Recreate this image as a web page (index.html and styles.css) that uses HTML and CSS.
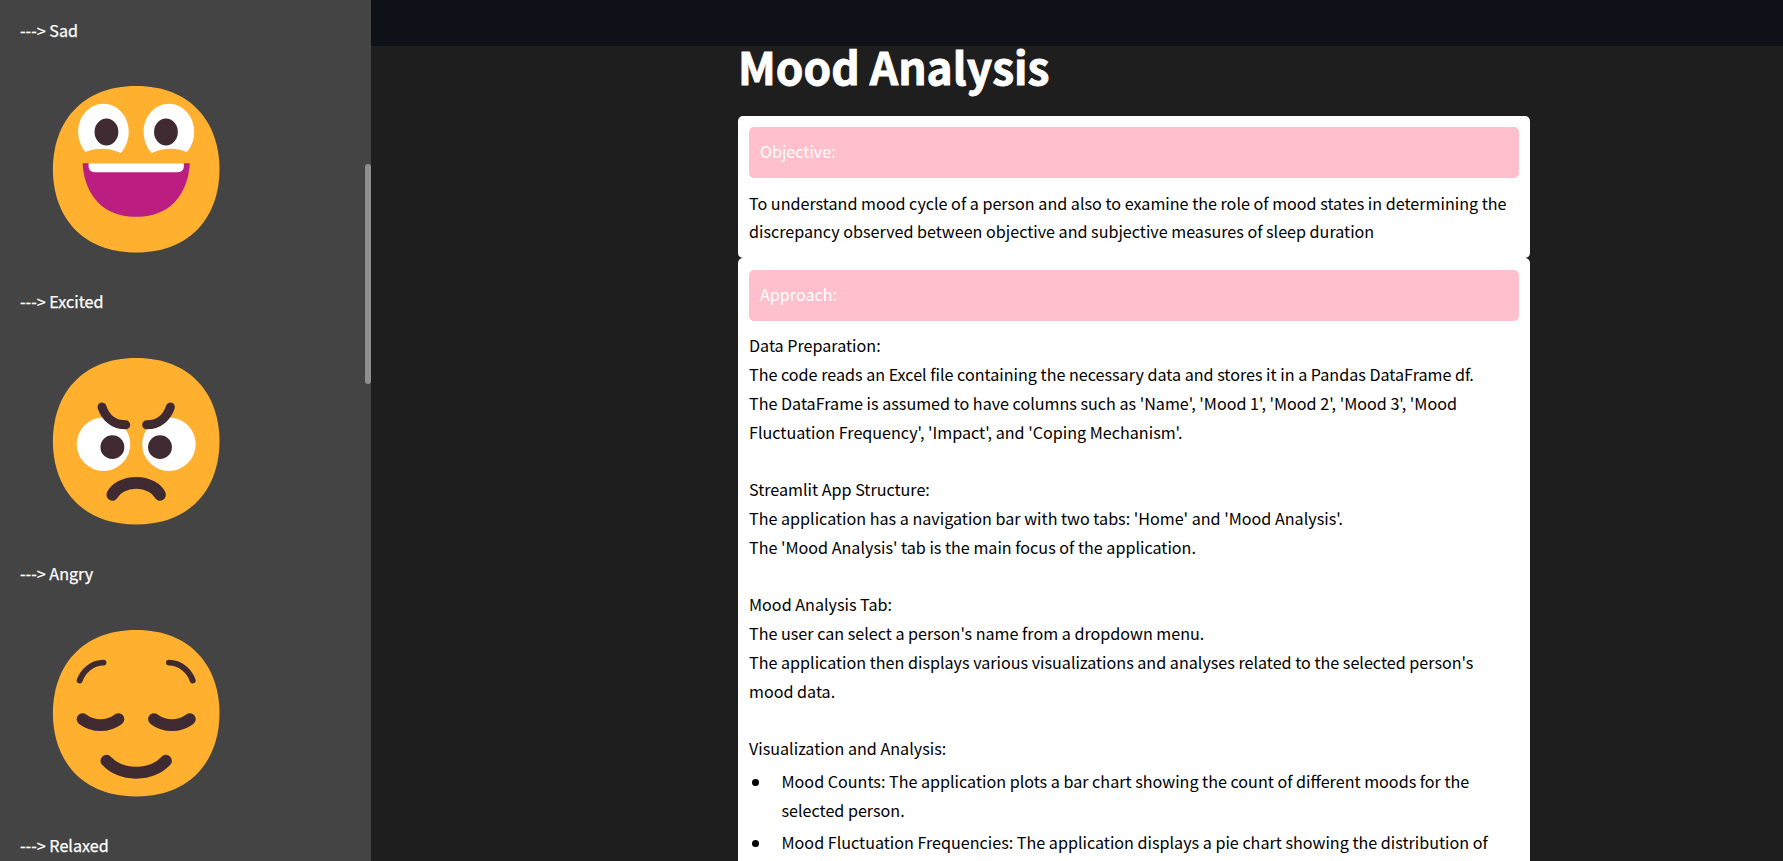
FILE: index.html
```html
<!DOCTYPE html>
<html lang="en">
<head>
<meta charset="utf-8">
<title>Mood Analysis</title>
<link rel="stylesheet" href="styles.css">
</head>
<body>
<div class="app">
  <aside class="sidebar">
    <p class="label">---&gt; Sad</p>
    <svg class="face" viewBox="0 0 32 32">
      <path class="skin" d="M16 30C25.33 30 30 23.73 30 16S25.33 2 16 2 2 8.27 2 16s4.67 14 14 14Z"/>
      <path class="white" d="M7.48 13.1C6.7 12.2 6.25 11 6.25 9.7C6.25 7.1 8.15 5 10.5 5S14.75 7.1 14.75 9.7C14.75 11.05 14.25 12.35 13.42 13.26C11.5 12.4 9.5 12.3 7.48 13.1Z"/>
      <path class="white" d="M24.52 13.1C25.3 12.2 25.75 11 25.75 9.7C25.75 7.1 23.85 5 21.5 5S17.25 7.1 17.25 9.7C17.25 11.05 17.75 12.35 18.58 13.26C20.5 12.4 22.5 12.3 24.52 13.1Z"/>
      <ellipse class="dark" cx="11" cy="9.75" rx="2" ry="2.25"/>
      <ellipse class="dark" cx="21" cy="9.75" rx="2" ry="2.25"/>
      <path class="mouth" d="M16 24C7 24 7 15 7 15H25C25 15 25 24 16 24Z"/>
      <path class="white" d="M8 15H24V15.5C24 16.1 23.6 16.5 23 16.5H9C8.4 16.5 8 16.1 8 15.5V15Z"/>
    </svg>
    <p class="label">---&gt; Excited</p>
    <svg class="face" viewBox="0 0 32 32">
      <path class="skin" d="M16 30C25.33 30 30 23.73 30 16S25.33 2 16 2 2 8.27 2 16s4.67 14 14 14Z"/>
      <circle class="white" cx="10.5" cy="16.5" r="4.5"/>
      <circle class="white" cx="21.5" cy="16.5" r="4.5"/>
      <circle class="dark" cx="12" cy="17" r="2"/>
      <circle class="dark" cx="20" cy="17" r="2"/>
      <path class="line medium" d="M10.25 10.25C10.75 11.75 12 13.25 14.25 13.25M21.75 10.25C21.25 11.75 20 13.25 17.75 13.25"/>
      <path class="line thick" d="M12 25C12.5 24 14 23 16 23S19.5 24 20 25"/>
    </svg>
    <p class="label">---&gt; Angry</p>
    <svg class="face" viewBox="0 0 32 32">
      <path class="skin" d="M16 30C25.33 30 30 23.73 30 16S25.33 2 16 2 2 8.27 2 16s4.67 14 14 14Z"/>
      <path class="line thin" d="M6.5 10.5C7 9 8.5 7.5 10.5 7.5M25.5 10.5C25 9 23.5 7.5 21.5 7.5"/>
      <path class="line thick" d="M7 17C8 17.75 9 18 10 18S12 17.75 13 17M19 17C20 17.75 21 18 22 18S24 17.75 25 17M11 24C13.5 26.67 18.5 26.67 21 24"/>
    </svg>
    <p class="label">---&gt; Relaxed</p>
    <div class="thumb"></div>
  </aside>
  <div class="view">
    <header class="topbar"></header>
    <main class="content">
      <h1 class="title">Mood Analysis</h1>
      <section class="card first">
        <h2 class="band">Objective:</h2>
        <p class="text intro">To understand mood cycle of a person and also to examine the role of mood states in determining the<br>discrepancy observed between objective and subjective measures of sleep duration</p>
      </section>
      <section class="card">
        <h2 class="band">Approach:</h2>
        <p class="text">Data Preparation:<br>The code reads an Excel file containing the necessary data and stores it in a Pandas DataFrame df.<br>The DataFrame is assumed to have columns such as 'Name', 'Mood 1', 'Mood 2', 'Mood 3', 'Mood<br>Fluctuation Frequency', 'Impact', and 'Coping Mechanism'.</p>
        <p class="text">Streamlit App Structure:<br>The application has a navigation bar with two tabs: 'Home' and 'Mood Analysis'.<br>The 'Mood Analysis' tab is the main focus of the application.</p>
        <p class="text">Mood Analysis Tab:<br>The user can select a person's name from a dropdown menu.<br>The application then displays various visualizations and analyses related to the selected person's<br>mood data.</p>
        <p class="text">Visualization and Analysis:</p>
        <ul class="points">
          <li><span class="dot"></span><span>Mood Counts: The application plots a bar chart showing the count of different moods for the<br>selected person.</span></li>
          <li><span class="dot"></span><span>Mood Fluctuation Frequencies: The application displays a pie chart showing the distribution of</span></li>
        </ul>
      </section>
    </main>
  </div>
</div>
</body>
</html>
```
FILE: styles.css
```css
* { box-sizing: border-box; margin: 0; padding: 0; }
html, body { height: 100%; overflow: hidden; }
body {
  background: #1e1e1e;
  color: #fff;
  font-family: "Noto Sans CJK SC", "Noto Sans", sans-serif;
  font-size: 16.14px;
  line-height: 29px;
}
.app { display: flex; height: 861px; overflow: hidden; }
.sidebar {
  position: relative;
  flex: none;
  width: 371px;
  padding: 15.6px 20px 0;
  background: #444;
  overflow: hidden;
}
.label { height: 29px; line-height: 28.8px; white-space: nowrap; -webkit-text-stroke: 0.25px #fff; }
.face {
  display: block;
  width: 190.4px;
  height: 190.4px;
  margin: 29.5px 0 22.9px 20.6px;
}
.skin { fill: #ffb02e; }
.white { fill: #fff; }
.dark { fill: #402a32; }
.mouth { fill: #bb1d80; }
.line { fill: none; stroke: #402a32; stroke-linecap: round; }
.thin { stroke-width: 1; }
.medium { stroke-width: 1.5; }
.thick { stroke-width: 2; }
.thumb {
  position: absolute;
  right: 0;
  top: 164px;
  width: 6px;
  height: 220px;
  border-radius: 3px;
  background: #8f8f8f;
}
.view { flex: 1; display: flex; flex-direction: column; min-width: 0; }
.topbar { flex: none; height: 46px; background: #0e1117; }
.content { width: 792px; margin-left: 367px; }
.title {
  height: 70px;
  font-size: 44.3px;
  font-weight: 700;
  line-height: 41px;
  white-space: nowrap;
  -webkit-text-stroke: 0.9px #fff;
}
.card {
  min-height: 620px;
  padding: 12px 11px 11px;
  border-radius: 5px;
  background: #fff;
  color: #000;
}
.card.first { min-height: 0; height: 142px; padding-top: 11px; }
.band {
  height: 51px;
  padding: 10px 11px;
  margin-bottom: 9.7px;
  border-radius: 5px;
  background: #ffbfcc;
  color: #fff;
  font-size: inherit;
  font-weight: 400;
  line-height: 28.8px;
}
.text { margin-bottom: 28px; white-space: nowrap; }
.intro { line-height: 28px; margin-top: 11px; }
.points { margin-top: -24px; list-style: none; white-space: nowrap; }
.points li { display: flex; margin-bottom: 3px; }
.dot {
  flex: none;
  width: 7px;
  height: 7px;
  margin: 12px 23px 0 2.5px;
  border-radius: 50%;
  background: #000;
}
```
